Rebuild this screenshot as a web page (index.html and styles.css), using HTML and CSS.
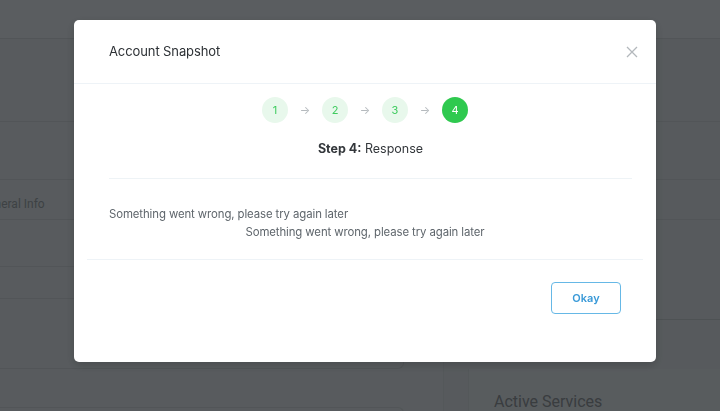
FILE: index.html
```html
<!DOCTYPE html>
<html lang="en">
<head>
<meta charset="utf-8">
<title>Account Snapshot</title>
<link rel="stylesheet" href="styles.css">
</head>
<body>
<div class="page">
  <header class="topbar"></header>
  <div class="layout">
    <section class="left">
      <div class="card">
        <div class="blk blk-a"></div>
        <div class="blk blk-b"></div>
        <div class="tabs"><span class="tab">General Info</span></div>
        <div class="blk blk-c"></div>
        <div class="blk blk-d"></div>
        <div class="blk blk-e"></div>
      </div>
      <div class="card card-next"></div>
    </section>
    <aside class="right">
      <div class="rblk rblk-a"></div>
      <div class="rblk rblk-b"></div>
      <div class="rblk rblk-c"></div>
      <div class="rblk rblk-d"></div>
      <div class="services"><h3 class="services-title">Active Services</h3></div>
    </aside>
  </div>
</div>

<div class="overlay">
  <div class="modal" role="dialog" aria-label="Account Snapshot">
    <div class="modal-header">
      <h2 class="modal-title">Account Snapshot</h2>
      <button class="close" aria-label="Close">
        <svg width="12" height="12" viewBox="0 0 12 12"><path d="M1 1L11 11M11 1L1 11" stroke="#b3b8bc" stroke-width="1.3" fill="none"/></svg>
      </button>
    </div>
    <div class="modal-body">
      <div class="steps">
        <span class="step">1</span><span class="arrow">&rarr;</span>
        <span class="step">2</span><span class="arrow">&rarr;</span>
        <span class="step">3</span><span class="arrow">&rarr;</span>
        <span class="step active">4</span>
      </div>
      <div class="panel">
        <div class="step-title"><b>Step 4:</b> Response</div>
        <div class="rule"></div>
        <p class="err">Something went wrong, please try again later</p>
      </div>
      <p class="err err-center">Something went wrong, please try again later</p>
    </div>
    <div class="modal-footer">
      <button class="okay">Okay</button>
    </div>
  </div>
</div>
</body>
</html>
```

FILE: styles.css
```css
* { box-sizing: border-box; }
html, body { margin: 0; padding: 0; }
body {
  width: 720px;
  height: 411px;
  overflow: hidden;
  font-family: Roboto, "Liberation Sans", sans-serif;
}

/* background page */
.page {
  height: 411px;
  background: #dbe4ea;
}
.topbar {
  height: 39px;
  background: #e1e9ef;
  border-bottom: 1px solid #ccd5db;
}
.layout {
  display: flex;
  height: 372px;
}
.left {
  width: 404px;
  flex: none;
}
.card {
  border-right: 1px solid #ccd5db;
  border-bottom: 1px solid #ccd5db;
  border-radius: 0 0 6px 0;
  padding-bottom: 8px;
}
.card-next {
  margin-top: 38px;
  height: 20px;
  border-top: 1px solid #ccd5db;
  border-bottom: none;
  border-radius: 0 6px 0 0;
}
.blk { border-bottom: 1px solid #ccd5db; }
.blk-a { height: 83px; }
.blk-b { height: 58px; }
.tabs {
  height: 40px;
  border-bottom: 1px solid #ccd5db;
  display: flex;
  align-items: flex-end;
  padding-bottom: 8px;
  font-size: 12px;
  color: #9aa4ab;
}
.tab { margin-left: -20px; }
.blk-c { height: 47px; }
.blk-d { height: 32px; }
.blk-e { height: 61px; border-bottom: none; }

.right {
  flex: 1;
  margin-left: 39px;
  background: #d9e2e8;
  border-left: 1px solid #d2dbe1;
}
.rblk { border-bottom: 1px solid #ccd5db; }
.rblk-a { height: 83px; }
.rblk-b { height: 58px; }
.rblk-c { height: 40px; }
.rblk-d { height: 100px; border-bottom-color: #c3ccd2; }
.services {
  margin: 49px 0 0 24px;
  padding: 23px 0 0 25px;
  border-left: 1px solid #d2dbe1;
  background: #dde6ec;
}
.services-title {
  margin: 0;
  font-size: 16px;
  font-weight: 400;
  color: #8f989e;
}

/* overlay + modal */
.overlay {
  position: fixed;
  inset: 0;
  background: rgba(0, 0, 0, 0.6);
  display: flex;
  align-items: flex-start;
  padding: 20px 0 0 74px;
}
.modal {
  width: 582px;
  height: 342px;
  background: #fff;
  border-radius: 5px;
  box-shadow: 0 3px 10px rgba(0, 0, 0, 0.18);
  font-family: Inter, "Noto Sans", sans-serif;
  display: flex;
  flex-direction: column;
}
.modal-header {
  height: 64px;
  flex: none;
  display: flex;
  align-items: center;
  justify-content: space-between;
  padding: 0 18px 0 35px;
  border-bottom: 1px solid #eef3f7;
}
.modal-title {
  margin: 0 0 2px;
  font-size: 13px;
  font-weight: 400;
  color: #2d3135;
  letter-spacing: -0.1px;
}
.close {
  border: 0;
  background: none;
  padding: 0;
  width: 12px;
  height: 12px;
  display: flex;
  margin-top: 1px;
}

.modal-body {
  margin: 0 13px;
  padding-top: 13px;
  padding-bottom: 18px;
  border-bottom: 1px solid #eef3f7;
}
.steps {
  display: flex;
  justify-content: center;
  align-items: center;
}
.step {
  width: 26px;
  height: 26px;
  border-radius: 50%;
  background: #e8f8ec;
  color: #3ecb5e;
  font-size: 11px;
  display: flex;
  align-items: center;
  justify-content: center;
}
.step.active {
  background: #2fc94f;
  color: #fff;
}
.arrow {
  width: 34px;
  text-align: center;
  font-size: 11px;
  color: #b5babe;
}
.panel {
  padding: 0 11px 0 22px;
}
.step-title {
  margin-top: 17px;
  text-align: center;
  font-size: 12.5px;
  line-height: 18px;
  color: #33373b;
}
.step-title b { font-weight: 700; }
.rule {
  height: 1px;
  background: #eef3f6;
  margin-top: 20px;
  margin-bottom: 26px;
}
.err {
  margin: 0;
  font-size: 11.4px;
  line-height: 18px;
  color: #5f666c;
  letter-spacing: -0.1px;
}
.err-center { text-align: center; }

.modal-footer {
  display: flex;
  justify-content: flex-end;
  padding: 22px 35px 0 0;
}
.okay {
  width: 70px;
  height: 32px;
  border: 1.5px solid #66b8e6;
  border-radius: 4px;
  background: #fff;
  color: #3a9ad8;
  font-family: Inter, "Noto Sans", sans-serif;
  font-size: 11px;
  font-weight: 600;
  padding: 0;
}
```
